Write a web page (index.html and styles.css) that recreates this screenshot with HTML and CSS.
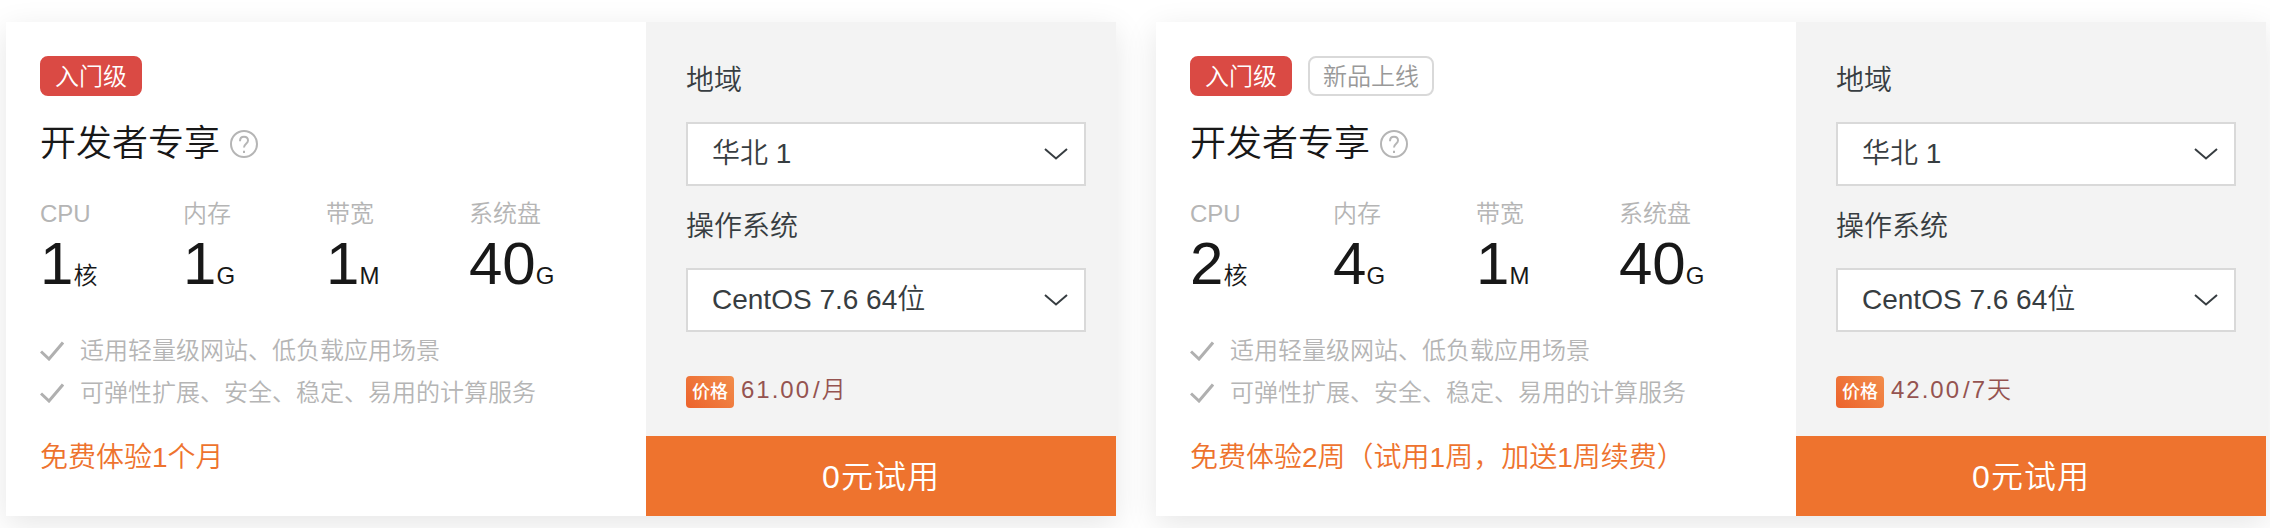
FILE: index.html
```html
<!DOCTYPE html>
<html lang="zh-CN">
<head>
<meta charset="utf-8">
<title>免费体验</title>
<link rel="stylesheet" href="styles.css">
</head>
<body>
<main class="plans">
  <article class="card">
    <section class="info">
      <div class="tags"><span class="tag tag-level">入门级</span></div>
      <div class="heading">
        <h2 class="title">开发者专享</h2>
        <button class="help" type="button" aria-label="帮助">
          <svg class="help-icon" viewBox="0 0 28 28" aria-hidden="true"><circle cx="14" cy="14" r="13"/><path d="M10 11.200C10 8.200 11.600 6.800 14 6.800s4 1.500 4 3.800c0 3.200-4 3.300-4 7"/><path d="M14 20.800v2.200"/></svg>
        </button>
      </div>
      <dl class="specs">
        <div class="spec"><dt class="spec-name">CPU</dt><dd class="spec-value">1<span class="unit">核</span></dd></div>
        <div class="spec"><dt class="spec-name">内存</dt><dd class="spec-value">1<span class="unit">G</span></dd></div>
        <div class="spec"><dt class="spec-name">带宽</dt><dd class="spec-value">1<span class="unit">M</span></dd></div>
        <div class="spec"><dt class="spec-name">系统盘</dt><dd class="spec-value">40<span class="unit">G</span></dd></div>
      </dl>
      <ul class="features">
        <li class="feature"><svg class="check" viewBox="0 0 24 20" aria-hidden="true"><path d="M1 10.500l8 7.500L23 1.500"/></svg>适用轻量级网站、低负载应用场景</li>
        <li class="feature"><svg class="check" viewBox="0 0 24 20" aria-hidden="true"><path d="M1 10.500l8 7.500L23 1.500"/></svg>可弹性扩展、安全、稳定、易用的计算服务</li>
      </ul>
      <p class="offer">免费体验1个月</p>
    </section>
    <form class="order">
      <div class="options">
        <label class="label" for="region-1">地域</label>
        <div class="picker">
          <select class="select" id="region-1"><option>华北 1</option></select>
          <svg class="chevron" viewBox="0 0 24 12" aria-hidden="true"><path d="M1 1l11 9.500L23 1"/></svg>
        </div>
        <label class="label" for="os-1">操作系统</label>
        <div class="picker">
          <select class="select" id="os-1"><option>CentOS 7.6 64位</option></select>
          <svg class="chevron" viewBox="0 0 24 12" aria-hidden="true"><path d="M1 1l11 9.500L23 1"/></svg>
        </div>
        <p class="price"><span class="price-tag">价格</span><span class="amount">61.00</span><span class="period">/月</span></p>
      </div>
      <button class="submit" type="button">0元试用</button>
    </form>
  </article>

  <article class="card">
    <section class="info">
      <div class="tags"><span class="tag tag-level">入门级</span><span class="tag tag-new">新品上线</span></div>
      <div class="heading">
        <h2 class="title">开发者专享</h2>
        <button class="help" type="button" aria-label="帮助">
          <svg class="help-icon" viewBox="0 0 28 28" aria-hidden="true"><circle cx="14" cy="14" r="13"/><path d="M10 11.200C10 8.200 11.600 6.800 14 6.800s4 1.500 4 3.800c0 3.200-4 3.300-4 7"/><path d="M14 20.800v2.200"/></svg>
        </button>
      </div>
      <dl class="specs">
        <div class="spec"><dt class="spec-name">CPU</dt><dd class="spec-value">2<span class="unit">核</span></dd></div>
        <div class="spec"><dt class="spec-name">内存</dt><dd class="spec-value">4<span class="unit">G</span></dd></div>
        <div class="spec"><dt class="spec-name">带宽</dt><dd class="spec-value">1<span class="unit">M</span></dd></div>
        <div class="spec"><dt class="spec-name">系统盘</dt><dd class="spec-value">40<span class="unit">G</span></dd></div>
      </dl>
      <ul class="features">
        <li class="feature"><svg class="check" viewBox="0 0 24 20" aria-hidden="true"><path d="M1 10.500l8 7.500L23 1.500"/></svg>适用轻量级网站、低负载应用场景</li>
        <li class="feature"><svg class="check" viewBox="0 0 24 20" aria-hidden="true"><path d="M1 10.500l8 7.500L23 1.500"/></svg>可弹性扩展、安全、稳定、易用的计算服务</li>
      </ul>
      <p class="offer">免费体验2周（试用1周，加送1周续费）</p>
    </section>
    <form class="order">
      <div class="options">
        <label class="label" for="region-2">地域</label>
        <div class="picker">
          <select class="select" id="region-2"><option>华北 1</option></select>
          <svg class="chevron" viewBox="0 0 24 12" aria-hidden="true"><path d="M1 1l11 9.500L23 1"/></svg>
        </div>
        <label class="label" for="os-2">操作系统</label>
        <div class="picker">
          <select class="select" id="os-2"><option>CentOS 7.6 64位</option></select>
          <svg class="chevron" viewBox="0 0 24 12" aria-hidden="true"><path d="M1 1l11 9.500L23 1"/></svg>
        </div>
        <p class="price"><span class="price-tag">价格</span><span class="amount">42.00</span><span class="period">/7天</span></p>
      </div>
      <button class="submit" type="button">0元试用</button>
    </form>
  </article>
</main>
</body>
</html>
```
FILE: styles.css
```css
* {
  box-sizing: border-box;
}

body,
h2,
dl,
dd,
ul,
p {
  margin: 0;
  padding: 0;
}

body {
  background: #fff;
  color: #181818;
  font-family: "Liberation Sans", "Noto Sans CJK SC", sans-serif;
  font-weight: 350;
}

button,
select {
  font: inherit;
}

.plans {
  display: grid;
  grid-template-columns: 1fr 1fr;
  gap: 40px;
  padding: 22px 4px 12px 6px;
}

.card {
  display: grid;
  grid-template-columns: 64fr 47fr;
  background: #fff;
  box-shadow: 0 8px 30px rgba(0, 0, 0, 0.1);
}

.info {
  padding: 34px 34px 34px 34px;
}

.tags {
  display: flex;
  gap: 16px;
}

.tag {
  height: 40px;
  padding: 0 13px;
  border: 2px solid #d9d9d9;
  border-radius: 8px;
  color: #999;
  font-size: 24px;
  line-height: 38px;
}

.tag-level {
  border-color: #da4a44;
  background: #da4a44;
  color: #fff;
}

.heading {
  display: flex;
  align-items: center;
  gap: 10px;
  margin-top: 24px;
}

.title {
  font-size: 36px;
  font-weight: 350;
  line-height: 48px;
}

.help {
  display: flex;
  padding: 0;
  border: 0;
  background: none;
}

.help-icon {
  width: 28px;
  height: 28px;
  fill: none;
  stroke: #b5b5b5;
  stroke-width: 2;
}

.specs {
  display: grid;
  grid-template-columns: repeat(4, 1fr);
  margin-top: 30px;
}

.spec-name {
  color: #b5b5b5;
  font-size: 24px;
  line-height: 32px;
}

.spec-value {
  font-size: 60px;
  line-height: 68px;
}

.unit {
  font-size: 24px;
  line-height: 32px;
}

.features {
  margin-top: 32px;
  list-style: none;
}

.feature {
  display: flex;
  align-items: center;
  gap: 16px;
  color: #b5b5b5;
  font-size: 24px;
  line-height: 42px;
}

.check {
  width: 24px;
  height: 20px;
  fill: none;
  stroke: #b0b0b0;
  stroke-width: 3;
}

.offer {
  margin-top: 24px;
  color: #ee732e;
  font-size: 28px;
  line-height: 40px;
}

.order {
  display: flex;
  flex-direction: column;
  background: #f3f3f3;
  color: #373d41;
}

.options {
  flex: 1;
  padding: 38px 30px 28px 40px;
}

.label {
  display: block;
  margin-bottom: 20px;
  font-size: 28px;
  line-height: 42px;
}

.picker {
  display: grid;
  align-items: center;
  margin-bottom: 20px;
}

.select,
.chevron {
  grid-area: 1 / 1;
}

.select {
  width: 100%;
  height: 64px;
  padding: 0 56px 2px 24px;
  border: 2px solid #d9d9d9;
  border-radius: 0;
  background: #fff;
  color: #373d41;
  font-size: 28px;
  appearance: none;
}

.chevron {
  justify-self: end;
  width: 24px;
  height: 12px;
  margin-right: 18px;
  fill: none;
  stroke: #373d41;
  stroke-width: 2;
  pointer-events: none;
}

.price {
  display: flex;
  align-items: flex-start;
  margin-top: 44px;
  color: #955350;
  font-size: 24px;
  line-height: 28px;
  letter-spacing: 2px;
}

.price-tag {
  margin-right: 7px;
  padding: 0 6px;
  border-radius: 4px;
  background: linear-gradient(45deg, #ec622b, #f28d4b);
  color: #fff;
  font-size: 18px;
  font-weight: 500;
  line-height: 32px;
  letter-spacing: 0;
}

.period {
  margin-left: 2px;
}

.submit {
  height: 80px;
  padding: 0 0 4px;
  border: 0;
  background: #ee732e;
  color: #fff;
  font-size: 32px;
  letter-spacing: 1px;
}
```
